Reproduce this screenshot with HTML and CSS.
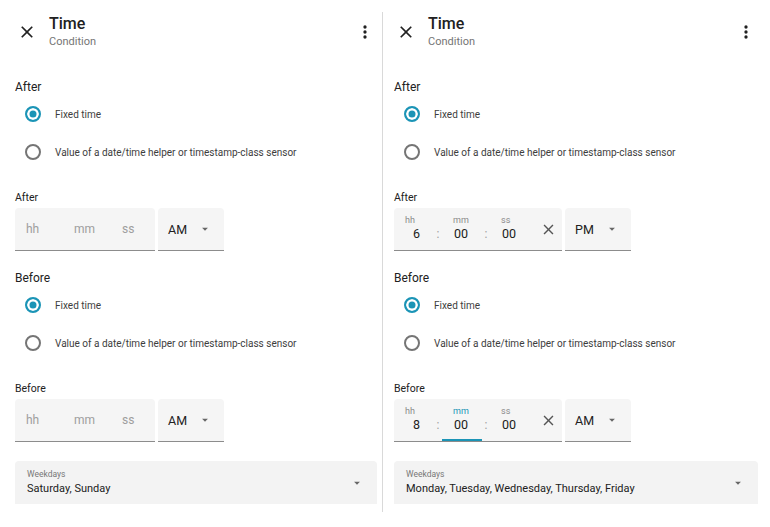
FILE: index.html
```html
<!DOCTYPE html>
<html lang="en">
<head>
    <meta charset="UTF-8">
    <title>Time Condition</title>
    <link rel="stylesheet" href="styles.css">
</head>
<body>
    <div class="page">
        <!-- empty condition -->
        <section class="panel panel-left">
            <header class="dialog-head">
                <svg class="close" viewBox="0 0 24 24"><path d="M19,6.41L17.59,5L12,10.59L6.41,5L5,6.41L10.59,12L5,17.59L6.41,19L12,13.41L17.59,19L19,17.59L13.41,12L19,6.41Z"/></svg>
                <div class="titles">
                    <div class="title">Time</div>
                    <div class="subtitle">Condition</div>
                </div>
                <svg class="menu" viewBox="0 0 24 24"><path d="M12,16A2,2 0 0,1 14,18A2,2 0 0,1 12,20A2,2 0 0,1 10,18A2,2 0 0,1 12,16M12,10A2,2 0 0,1 14,12A2,2 0 0,1 12,14A2,2 0 0,1 10,12A2,2 0 0,1 12,10M12,4A2,2 0 0,1 14,6A2,2 0 0,1 12,8A2,2 0 0,1 10,6A2,2 0 0,1 12,4Z"/></svg>
            </header>

            <div class="section-title">After</div>
            <div class="radio-row"><span class="radio checked"></span>Fixed time</div>
            <div class="radio-row"><span class="radio"></span>Value of a date/time helper or timestamp-class sensor</div>
            <div class="field-label">After</div>
            <div class="time-row">
                <div class="time-field empty">
                    <div class="seg"><span class="ph">hh</span></div>
                    <div class="colon"></div>
                    <div class="seg"><span class="ph">mm</span></div>
                    <div class="colon"></div>
                    <div class="seg"><span class="ph">ss</span></div>
                </div>
                <div class="select-box">AM
                    <svg class="arrow" viewBox="0 0 24 24"><path d="M7,10L12,15L17,10H7Z"/></svg>
                </div>
            </div>

            <div class="section-title next">Before</div>
            <div class="radio-row"><span class="radio checked"></span>Fixed time</div>
            <div class="radio-row"><span class="radio"></span>Value of a date/time helper or timestamp-class sensor</div>
            <div class="field-label">Before</div>
            <div class="time-row">
                <div class="time-field empty">
                    <div class="seg"><span class="ph">hh</span></div>
                    <div class="colon"></div>
                    <div class="seg"><span class="ph">mm</span></div>
                    <div class="colon"></div>
                    <div class="seg"><span class="ph">ss</span></div>
                </div>
                <div class="select-box">AM
                    <svg class="arrow" viewBox="0 0 24 24"><path d="M7,10L12,15L17,10H7Z"/></svg>
                </div>
            </div>

            <div class="weekdays">
                <div class="wk-text">
                    <div class="wk-label">Weekdays</div>
                    <div class="wk-value">Saturday, Sunday</div>
                </div>
                <svg class="arrow" viewBox="0 0 24 24"><path d="M7,10L12,15L17,10H7Z"/></svg>
            </div>
        </section>

        <div class="divider"></div>

        <!-- filled condition -->
        <section class="panel panel-right">
            <header class="dialog-head">
                <svg class="close" viewBox="0 0 24 24"><path d="M19,6.41L17.59,5L12,10.59L6.41,5L5,6.41L10.59,12L5,17.59L6.41,19L12,13.41L17.59,19L19,17.59L13.41,12L19,6.41Z"/></svg>
                <div class="titles">
                    <div class="title">Time</div>
                    <div class="subtitle">Condition</div>
                </div>
                <svg class="menu" viewBox="0 0 24 24"><path d="M12,16A2,2 0 0,1 14,18A2,2 0 0,1 12,20A2,2 0 0,1 10,18A2,2 0 0,1 12,16M12,10A2,2 0 0,1 14,12A2,2 0 0,1 12,14A2,2 0 0,1 10,12A2,2 0 0,1 12,10M12,4A2,2 0 0,1 14,6A2,2 0 0,1 12,8A2,2 0 0,1 10,6A2,2 0 0,1 12,4Z"/></svg>
            </header>

            <div class="section-title">After</div>
            <div class="radio-row"><span class="radio checked"></span>Fixed time</div>
            <div class="radio-row"><span class="radio"></span>Value of a date/time helper or timestamp-class sensor</div>
            <div class="field-label">After</div>
            <div class="time-row">
                <div class="time-field filled">
                    <div class="seg"><span class="lbl">hh</span><span class="val">6</span></div>
                    <div class="colon">:</div>
                    <div class="seg"><span class="lbl">mm</span><span class="val">00</span></div>
                    <div class="colon">:</div>
                    <div class="seg"><span class="lbl">ss</span><span class="val">00</span></div>
                    <svg class="clear" viewBox="0 0 24 24"><path d="M19,6.41L17.59,5L12,10.59L6.41,5L5,6.41L10.59,12L5,17.59L6.41,19L12,13.41L17.59,19L19,17.59L13.41,12L19,6.41Z"/></svg>
                </div>
                <div class="select-box">PM
                    <svg class="arrow" viewBox="0 0 24 24"><path d="M7,10L12,15L17,10H7Z"/></svg>
                </div>
            </div>

            <div class="section-title next">Before</div>
            <div class="radio-row"><span class="radio checked"></span>Fixed time</div>
            <div class="radio-row"><span class="radio"></span>Value of a date/time helper or timestamp-class sensor</div>
            <div class="field-label">Before</div>
            <div class="time-row">
                <div class="time-field filled">
                    <div class="seg"><span class="lbl">hh</span><span class="val">8</span></div>
                    <div class="colon">:</div>
                    <div class="seg active"><span class="lbl">mm</span><span class="val">00</span></div>
                    <div class="colon">:</div>
                    <div class="seg"><span class="lbl">ss</span><span class="val">00</span></div>
                    <svg class="clear" viewBox="0 0 24 24"><path d="M19,6.41L17.59,5L12,10.59L6.41,5L5,6.41L10.59,12L5,17.59L6.41,19L12,13.41L17.59,19L19,17.59L13.41,12L19,6.41Z"/></svg>
                </div>
                <div class="select-box">AM
                    <svg class="arrow" viewBox="0 0 24 24"><path d="M7,10L12,15L17,10H7Z"/></svg>
                </div>
            </div>

            <div class="weekdays">
                <div class="wk-text">
                    <div class="wk-label">Weekdays</div>
                    <div class="wk-value">Monday, Tuesday, Wednesday, Thursday, Friday</div>
                </div>
                <svg class="arrow" viewBox="0 0 24 24"><path d="M7,10L12,15L17,10H7Z"/></svg>
            </div>
        </section>
    </div>
</body>
</html>
```

FILE: styles.css
```css
* {
    box-sizing: border-box;
}
body {
    margin: 0;
    background: #fff;
    font-family: Roboto, "Noto Sans", Arial, sans-serif;
    color: #212121;
}
.page {
    display: grid;
    grid-template-columns: 382px 1px 387px;
    height: 527px;
}
.divider {
    background: #d9d9d9;
    margin: 12px 0 15px;
}
.panel {
    padding: 0 5px 0 15px;
}
.panel-right {
    padding: 0 12px 0 11px;
}
.dialog-head {
    display: flex;
    align-items: center;
    height: 64px;
}
.close {
    width: 20px;
    height: 20px;
    margin: 0 12px 0 2px;
    fill: #212121;
}
.title {
    font-size: 16px;
    line-height: 20px;
    font-weight: 500;
}
.subtitle {
    font-size: 11px;
    line-height: 16px;
    color: #757575;
}
.menu {
    width: 20px;
    height: 20px;
    margin-left: auto;
    margin-right: 2px;
    fill: #212121;
}
.section-title {
    font-size: 12px;
    line-height: 16px;
    margin-top: 15px;
}
.section-title.next {
    margin-top: 19px;
}
.radio-row {
    display: flex;
    align-items: center;
    height: 38px;
    font-size: 10px;
    color: #3d3d3d;
}
.radio {
    width: 16px;
    height: 16px;
    border: 2px solid #757575;
    border-radius: 50%;
    margin: 0 14px 0 10px;
}
.radio.checked {
    border-color: #1b94b6;
    background: #1b94b6;
    box-shadow: inset 0 0 0 2.5px #fff;
}
.field-label {
    font-size: 10.5px;
    line-height: 14px;
    margin-top: 20px;
}
.time-row {
    display: flex;
    gap: 3px;
    margin-top: 3px;
}
.time-field {
    display: flex;
    width: 140px;
    height: 43px;
    background: #f5f5f5;
    border-bottom: 1px solid #8c8c8c;
    border-radius: 4px 4px 0 0;
}
.time-field.filled {
    width: 168px;
}
.seg {
    display: flex;
    flex-direction: column;
    width: 40px;
    padding: 0 14px 0 11px;
}
.empty .seg {
    justify-content: center;
}
.ph {
    font-size: 12px;
    color: #9e9e9e;
}
.lbl {
    font-size: 9px;
    line-height: 11px;
    padding-top: 7px;
    color: #8a8a8a;
}
.val {
    font-size: 12.5px;
    line-height: 16px;
    text-align: right;
    color: #212121;
}
.seg.active {
    border-bottom: 2px solid #1b94b6;
}
.seg.active .lbl {
    color: #1b94b6;
}
.colon {
    width: 8px;
    padding-top: 18px;
    font-size: 12px;
    line-height: 16px;
    text-align: center;
    color: #9e9e9e;
}
.clear {
    width: 17px;
    height: 17px;
    align-self: center;
    margin: 0 5px 0 auto;
    fill: #555;
}
.select-box {
    display: flex;
    align-items: center;
    width: 66px;
    height: 43px;
    padding-left: 10px;
    font-size: 12.5px;
    background: #f5f5f5;
    border-bottom: 1px solid #8c8c8c;
    border-radius: 4px 4px 0 0;
}
.arrow {
    width: 14px;
    height: 14px;
    margin: 0 12px 0 auto;
    fill: #666;
}
.weekdays {
    display: flex;
    align-items: center;
    height: 43px;
    margin-top: 19px;
    padding-left: 12px;
    background: #f3f3f3;
    border-radius: 4px 4px 0 0;
}
.wk-text {
    align-self: flex-start;
    padding-top: 7px;
}
.wk-label {
    font-size: 8.5px;
    line-height: 12px;
    color: #777;
}
.wk-value {
    font-size: 11px;
    line-height: 18px;
}
.weekdays .arrow {
    margin-right: 13px;
}
```
